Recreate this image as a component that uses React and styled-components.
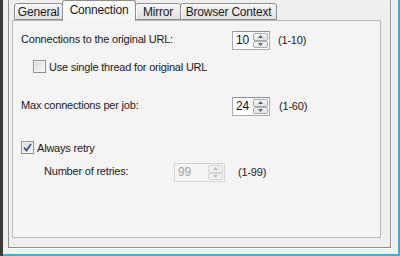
import React from 'react';
import styled, { createGlobalStyle } from 'styled-components';

const GlobalStyle = createGlobalStyle`
  html, body {
    margin: 0;
    padding: 0;
    background: #f0f0f0;
  }
  body {
    width: 400px;
    height: 256px;
    overflow: hidden;
    font-family: "Liberation Sans", Arial, sans-serif;
    font-size: 11px;
    letter-spacing: -0.2px;
    color: #1a1a1a;
  }
`;

const Screen = styled.div`
  display: flex;
  width: 400px;
  height: 256px;
  background: #f0f0f0;
`;

const DarkEdge = styled.div`
  width: 3px;
  flex: none;
  background: #3a3a3a;
`;

const Window = styled.div`
  flex: 1;
  display: flex;
  flex-direction: column;
  padding: 0 7px 6px 5px;
  background: #efefef;
  border-right: 2px solid #2fb4dc;
  border-bottom: 2px solid #2fb4dc;
`;

const Frame = styled.div`
  flex: 1;
  display: flex;
  flex-direction: column;
  padding: 0 9px 9px 3px;
  border: 1px solid #8f8f8f;
  border-top: none;
  box-shadow: 1px 1px 0 #fff;
`;

const TabStrip = styled.div`
  display: flex;
  align-items: flex-end;
  height: 20px;
  padding-left: 2px;
`;

const Tab = styled.div`
  position: relative;
  z-index: ${p => (p.active ? 2 : 1)};
  width: ${p => p.w}px;
  height: ${p => (p.active ? 21 : 17)}px;
  margin-left: ${p => (p.first ? 0 : -1)}px;
  margin-bottom: ${p => (p.active ? -1 : 0)}px;
  box-sizing: border-box;
  display: flex;
  align-items: center;
  justify-content: center;
  padding: ${p => (p.active ? '0 0 3px' : '1px 0 0')};
  font-size: 12px;
  border: 1px solid #8d8d8d;
  border-bottom: ${p => (p.active ? 'none' : '1px solid #8d8d8d')};
  border-radius: 3px 3px 0 0;
  background: ${p =>
    p.active
      ? 'linear-gradient(#fdfdfd, #f4f4f4)'
      : 'linear-gradient(#f6f6f6 0%, #ececec 50%, #e0e0e0 100%)'};
  box-shadow: inset 1px 1px 0 #fff;
  white-space: nowrap;
`;

const Page = styled.div`
  flex: 1;
  display: flex;
  flex-direction: column;
  padding: 10px 0 0 8px;
  border: 1px solid #b9b9b9;
  background: #f4f4f4;
`;

const Row = styled.div`
  display: flex;
  align-items: center;
  margin-top: ${p => p.gap || 0}px;
  padding-left: ${p => p.indent || 0}px;
`;

const Label = styled.span`
  flex: none;
  width: ${p => p.w}px;
  padding-bottom: 3px;
  white-space: nowrap;
`;

const Range = styled.span`
  margin-left: ${p => p.gap}px;
  padding-bottom: 1px;
`;

const SpinBox = styled.div`
  flex: none;
  display: flex;
  box-sizing: border-box;
  width: ${p => p.w}px;
  height: 19px;
  padding: 1px;
  border: 1px solid ${p => (p.disabled ? '#d6d6d6' : '#a9abb2')};
  border-top-color: ${p => (p.disabled ? '#cfcfcf' : '#8e9097')};
  background: ${p => (p.disabled ? '#f4f4f4' : '#fff')};
`;

const SpinValue = styled.span`
  flex: 1;
  padding-left: 2px;
  font-size: 12px;
  line-height: 15px;
  color: ${p => (p.disabled ? '#a3a3a3' : '#111')};
`;

const SpinButtons = styled.div`
  display: flex;
  flex-direction: column;
  justify-content: space-between;
  width: 15px;
`;

const SpinButton = styled.div`
  box-sizing: border-box;
  height: 8px;
  display: flex;
  align-items: center;
  justify-content: center;
  border: 1px solid ${p => (p.disabled ? '#d4d4d4' : '#acacac')};
  border-radius: 2px;
  background: ${p =>
    p.disabled ? '#f1f1f1' : 'linear-gradient(#f7f7f7, #e3e3e3)'};
`;

const Check = styled.span`
  flex: none;
  box-sizing: border-box;
  width: 13px;
  height: 13px;
  display: flex;
  align-items: center;
  justify-content: center;
  border: 1px solid #8e8f8f;
  box-shadow: inset 0 0 0 1px #f4f4f4;
  background: linear-gradient(135deg, #d7d7d7, #fbfbfb);
  margin-right: 3px;
`;

function Arrow({ up, disabled }) {
  const c = disabled ? '#b9bcc2' : '#4e6286';
  return (
    <svg width="5" height="3" viewBox="0 0 5 3">
      <path d={up ? 'M0 3 L2.5 0 L5 3 Z' : 'M0 0 L5 0 L2.5 3 Z'} fill={c} />
    </svg>
  );
}

function Spinner({ value, w, disabled }) {
  return (
    <SpinBox w={w} disabled={disabled}>
      <SpinValue disabled={disabled}>{value}</SpinValue>
      <SpinButtons>
        <SpinButton disabled={disabled}><Arrow up disabled={disabled} /></SpinButton>
        <SpinButton disabled={disabled}><Arrow disabled={disabled} /></SpinButton>
      </SpinButtons>
    </SpinBox>
  );
}

function Checkbox({ checked }) {
  return (
    <Check>
      {checked && (
        <svg width="9" height="9" viewBox="0 0 9 9">
          <path d="M1 4.5 L3.5 7.5 L8 1" fill="none" stroke="#3b4f8c" strokeWidth="1.8" />
        </svg>
      )}
    </Check>
  );
}

const tabs = [
  { name: 'General', w: 49 },
  { name: 'Connection', w: 74, active: true },
  { name: 'Mirror', w: 46 },
  { name: 'Browser Context', w: 97 },
];

export default function App() {
  return (
    <Screen>
      <GlobalStyle />
      <DarkEdge />
      <Window>
        <Frame>
          <TabStrip>
            {tabs.map((t, i) => (
              <Tab key={t.name} w={t.w} active={t.active} first={i === 0}>
                {t.name}
              </Tab>
            ))}
          </TabStrip>
          <Page>
            <Row>
              <Label w={211}>Connections to the original URL:</Label>
              <Spinner value="10" w={38} />
              <Range gap={8}>(1-10)</Range>
            </Row>
            <Row gap={10} indent={12}>
              <Checkbox />
              <span>Use single thread for original URL</span>
            </Row>
            <Row gap={24}>
              <Label w={211}>Max connections per job:</Label>
              <Spinner value="24" w={38} />
              <Range gap={9}>(1-60)</Range>
            </Row>
            <Row gap={25}>
              <Checkbox checked />
              <span>Always retry</span>
            </Row>
            <Row gap={9} indent={23}>
              <Label w={130}>Number of retries:</Label>
              <Spinner value="99" w={51} disabled />
              <Range gap={13}>(1-99)</Range>
            </Row>
          </Page>
        </Frame>
      </Window>
    </Screen>
  );
}
